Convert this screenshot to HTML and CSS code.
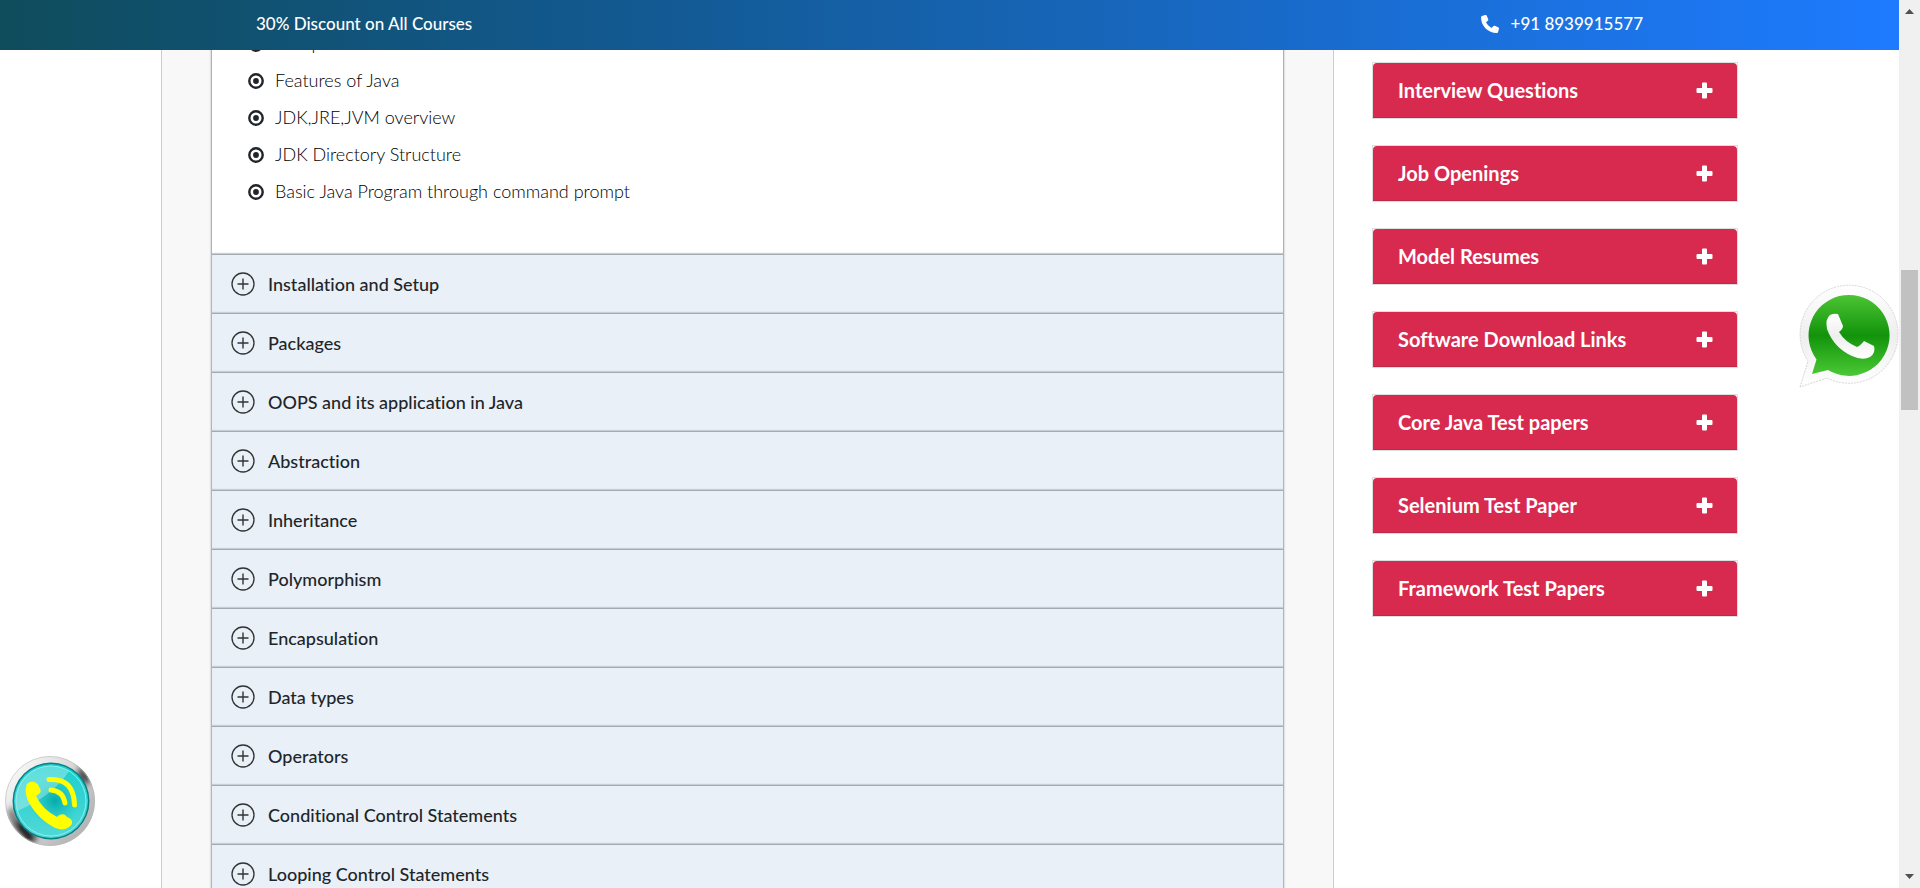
FILE: index.html
```html
<!DOCTYPE html>
<html lang="en">
<head>
<meta charset="utf-8">
<title>Java Course Syllabus</title>
<link rel="stylesheet" href="styles.css">
</head>
<body>
<svg class="defs" width="0" height="0" aria-hidden="true">
  <symbol id="i-add" viewBox="0 0 24 24"><circle cx="12" cy="12" r="11" fill="none" stroke="currentColor" stroke-width="1.3"/><path d="M12 6.500v11M6.500 12h11" fill="none" stroke="currentColor" stroke-width="1.400"/></symbol>
  <symbol id="i-plus" viewBox="0 0 17 17"><path d="M7 .5h3q1 0 1 1V6h4.500q1 0 1 1v3q0 1-1 1H11v4.500q0 1-1 1H7q-1 0-1-1V11H1.500q-1 0-1-1V7q0-1 1-1H6V1.500q0-1 1-1z" fill="currentColor"/></symbol>
  <symbol id="i-dot" viewBox="0 0 16 16"><circle cx="8" cy="8" r="6.700" fill="none" stroke="currentColor" stroke-width="2.400"/><circle cx="8" cy="8" r="2.900" fill="currentColor"/></symbol>
</svg>
<div class="window">
  <div class="page">
    <header class="topbar">
      <p class="offer">30% Discount on All Courses</p>
      <a class="phone" href="tel:+918939915577">
        <svg class="phone-icon" viewBox="0 0 512 512" aria-hidden="true"><path fill="currentColor" d="M164.900 24.600c-7.700-18.600-28-28.500-47.400-23.200l-88 24C12.100 30.200 0 46 0 64c0 247.400 200.600 448 448 448 18 0 33.800-12.100 38.600-29.500l24-88c5.300-19.400-4.600-39.700-23.200-47.400l-96-40c-16.300-6.800-35.200-2.100-46.300 11.600L304.700 368C234.300 334.700 177.300 277.700 144 207.300l49.300-40.300c13.700-11.200 18.400-30 11.600-46.300l-40-96z"/></svg>
        <span>+91 8939915577</span>
      </a>
    </header>
    <main class="content">
      <section class="course">
        <div class="accordion">
          <ul class="topics">
            <li><svg><use href="#i-dot"/></svg>Comparison with C++</li>
            <li><svg><use href="#i-dot"/></svg>Features of Java</li>
            <li><svg><use href="#i-dot"/></svg>JDK,JRE,JVM overview</li>
            <li><svg><use href="#i-dot"/></svg>JDK Directory Structure</li>
            <li><svg><use href="#i-dot"/></svg>Basic Java Program through command prompt</li>
          </ul>
          <button class="module"><svg><use href="#i-add"/></svg>Installation and Setup</button>
          <button class="module"><svg><use href="#i-add"/></svg>Packages</button>
          <button class="module"><svg><use href="#i-add"/></svg>OOPS and its application in Java</button>
          <button class="module"><svg><use href="#i-add"/></svg>Abstraction</button>
          <button class="module"><svg><use href="#i-add"/></svg>Inheritance</button>
          <button class="module"><svg><use href="#i-add"/></svg>Polymorphism</button>
          <button class="module"><svg><use href="#i-add"/></svg>Encapsulation</button>
          <button class="module"><svg><use href="#i-add"/></svg>Data types</button>
          <button class="module"><svg><use href="#i-add"/></svg>Operators</button>
          <button class="module"><svg><use href="#i-add"/></svg>Conditional Control Statements</button>
          <button class="module"><svg><use href="#i-add"/></svg>Looping Control Statements</button>
        </div>
      </section>
      <aside class="resources">
        <div class="card"><button>Interview Questions<svg><use href="#i-plus"/></svg></button></div>
        <div class="card"><button>Job Openings<svg><use href="#i-plus"/></svg></button></div>
        <div class="card"><button>Model Resumes<svg><use href="#i-plus"/></svg></button></div>
        <div class="card"><button>Software Download Links<svg><use href="#i-plus"/></svg></button></div>
        <div class="card"><button>Core Java Test papers<svg><use href="#i-plus"/></svg></button></div>
        <div class="card"><button>Selenium Test Paper<svg><use href="#i-plus"/></svg></button></div>
        <div class="card"><button>Framework Test Papers<svg><use href="#i-plus"/></svg></button></div>
      </aside>
    </main>
  </div>
  <div class="scrollbar" aria-hidden="true">
    <svg class="arrow" viewBox="0 0 9 5"><path d="M0 5 4.500 0 9 5z"/></svg>
    <div class="track"><div class="thumb"></div></div>
    <svg class="arrow" viewBox="0 0 9 5"><path d="M0 0 4.500 5 9 0z"/></svg>
  </div>
</div>
<a class="call" href="tel:+918939915577" aria-label="Call us">
  <svg viewBox="0 0 90 90">
    <defs>
      <linearGradient id="rim" x1="0" y1="0.100" x2="1" y2="0.900"><stop offset="0" stop-color="#fff"/><stop offset="1" stop-color="#aaa"/></linearGradient>
      <linearGradient id="disc" x1="0" y1="0" x2="0" y2="1"><stop offset="0" stop-color="#19cfcf"/><stop offset="1" stop-color="#52d8d6"/></linearGradient>
      <radialGradient id="deep" cx=".5" cy=".5" r=".5"><stop offset="0" stop-color="#08aaa8"/><stop offset="1" stop-color="#14c8c8" stop-opacity="0"/></radialGradient>
      <filter id="soft"><feGaussianBlur stdDeviation="3"/></filter>
      <clipPath id="ring"><circle cx="45" cy="45" r="45"/></clipPath>
    </defs>
    <circle cx="45" cy="45" r="45" fill="url(#rim)"/>
    <g clip-path="url(#ring)"><g filter="url(#soft)"><path d="M70 24 76 8 90 22 78 30z" fill="#555"/><path d="M4 64 14 62 32 82 24 88z" fill="#111"/><path d="M2 56 8 50 14 62 8 72z" fill="#777"/></g></g>
    <circle cx="45" cy="45" r="44.500" fill="none" stroke="#bbb" stroke-width=".6"/>
    <circle cx="46" cy="45" r="38.500" fill="#087f84"/>
    <circle cx="46" cy="45" r="37" fill="url(#disc)"/>
    <circle cx="50" cy="45" r="26" fill="url(#deep)"/>
    <path d="M12 55A35 35 0 0 1 64 15Q48 40 12 55z" fill="#fff" opacity=".3"/>
    <circle cx="46" cy="45" r="35" fill="none" stroke="#8ceeee" stroke-width="1"/>
    <path d="M22 28C26 24 33 26 34 31C38 36 34 38 31 40C36 50 43 56 52 61C55 58 59 57 62 61C69 63 68 69 64 71C57 77 46 71 37 63C27 54 17 39 22 28z" fill="#ff0"/>
    <path d="M46 34Q58 35 60 47M44 23.500Q69 22 69.500 49" fill="none" stroke="#ff0" stroke-width="5" stroke-linecap="round"/>
  </svg>
</a>
<a class="whatsapp" href="#whatsapp" aria-label="Chat on WhatsApp">
  <svg viewBox="0 0 100 102">
    <defs>
      <linearGradient id="green" x1="0" y1="0" x2="0" y2="1"><stop offset="0" stop-color="#4cc434"/><stop offset=".5" stop-color="#12930b"/><stop offset="1" stop-color="#4bc935"/></linearGradient>
      <linearGradient id="white" x1="0" y1="0" x2="0" y2="1"><stop offset="0" stop-color="#fff"/><stop offset=".5" stop-color="#eee"/><stop offset="1" stop-color="#fff"/></linearGradient>
    </defs>
    <path d="M1 101 9 75A49 49 0 1 1 28 92z" fill="url(#white)" stroke="#ccc" stroke-width=".8" stroke-dasharray="2 1"/>
    <path d="M13 88 17.500 73.500A40.500 40.500 0 1 1 29 84z" fill="url(#green)"/>
    <path d="M31 29Q35 27 39 28L44 40Q44 43 40 46Q46 56 58 61Q61 60 65 55L75 60Q77 67 71 71Q64 75 53 70Q35 62 28 43Q26 33 31 29z" fill="url(#white)"/>
  </svg>
</a>
</body>
</html>
```
FILE: styles.css
```css
* { box-sizing: border-box; }
body { margin: 0; font-family: Lato, sans-serif; font-variant-ligatures: none; color: #212529; background: #fff; }
button { font: inherit; font-variant-ligatures: none; color: inherit; border: 0; text-align: left; cursor: pointer; }
a { color: inherit; text-decoration: none; }
.defs { position: absolute; }
.window { display: grid; grid-template-columns: minmax(0, 1fr) 21px; height: 100vh; overflow: hidden; }
.page { position: relative; overflow: hidden; }

.topbar {
  position: absolute; top: 0; left: 0; right: 0; z-index: 2;
  display: flex; align-items: center; justify-content: space-between;
  height: 50px; padding: 0 256px 2px;
  color: #fff; font-size: 17px; font-weight: 500; line-height: 24px;
  background: linear-gradient(to right, #0f4c5c, #135a94 35%, #1e7bff);
}
.offer { margin: 0; }
.phone { display: flex; align-items: center; gap: 12px; }
.phone-icon { width: 18px; height: 18px; }

.content { display: flex; justify-content: space-between; padding: 0 161px; }
.course { flex: 0 1 1173px; padding: 0 49px; background: #f8f8f8; border: solid #ccc; border-width: 0 1px; }
.accordion { background: #fff; border: solid #aeb0b2; border-width: 0 1px; box-shadow: 0 0 2px #bbb; }
.topics { margin: 0; padding: 24px 36px 45px; list-style: none; font-size: 18px; font-weight: 300; color: #000; }
.topics li { display: flex; align-items: center; gap: 11px; height: 37px; }
.topics svg { width: 16px; height: 16px; margin-top: 2px; color: #212529; }
.module {
  display: flex; align-items: center; gap: 13px;
  width: 100%; height: 59px; padding: 0 19px;
  font-size: 18px; font-weight: 500; background: #e9f0f8;
  border-top: 1px solid #a5aab2; box-shadow: 0 -1px 1px #c9ced3;
}
.module svg { width: 24px; height: 24px; color: #333; }

.resources { flex: 0 1 366px; padding-top: 62px; }
.card { margin-bottom: 26px; border: 1px solid #dcdfe0; }
.card button {
  display: flex; align-items: center; justify-content: space-between;
  width: 100%; height: 55px; padding: 0 24px 0 25px;
  color: #fff; background: #d82a4e; border-bottom: 1px solid #bd2947;
  border-radius: 4px 4px 0 0; font-size: 20px; font-weight: 700;
}
.card svg { width: 17px; height: 17px; }

.scrollbar { display: flex; flex-direction: column; align-items: center; padding: 9px 0; background: #f0f0f0; }
.arrow { width: 9px; height: 5px; fill: #505050; }
.track { flex: 1; width: 17px; padding-top: 256px; }
.thumb { height: 140px; background: #c1c1c1; }

.call { position: fixed; left: 5px; bottom: 42px; width: 90px; height: 90px; z-index: 3; }
.whatsapp { position: fixed; right: 21px; top: 286px; width: 100px; height: 102px; z-index: 3; }
.call svg, .whatsapp svg { display: block; width: 100%; height: 100%; overflow: visible; }
```
